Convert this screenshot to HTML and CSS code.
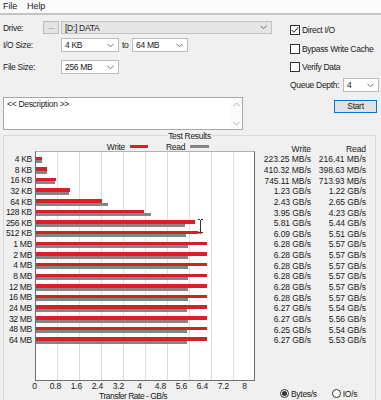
FILE: index.html
```html
<!DOCTYPE html>
<html>
<head>
<meta charset="utf-8">
<title>ATTO Disk Benchmark</title>
<link rel="stylesheet" href="styles.css">
</head>
<body>
<div class="app">
  <div class="menubar"><span class="menu">File</span><span class="menu">Help</span></div>
  <div class="top">
    <div class="left">
      <div class="row r-drive">
        <span class="lbl-drive">Drive:</span>
        <span class="btn-dots">...</span>
        <span class="combo combo-drive"><span>[D:] DATA</span><svg class="chev" width="7" height="5" viewBox="0 0 7 5"><polyline points="0.5,0.8 3.5,3.8 6.5,0.8" fill="none" stroke="#6a6a6a" stroke-width="1"/></svg></span>
      </div>
      <div class="row r-io">
        <span class="lbl">I/O Size:</span>
        <span class="combo combo-sm"><span>4 KB</span><svg class="chev" width="7" height="5" viewBox="0 0 7 5"><polyline points="0.5,0.8 3.5,3.8 6.5,0.8" fill="none" stroke="#6a6a6a" stroke-width="1"/></svg></span>
        <span class="to">to</span>
        <span class="combo combo-to"><span>64 MB</span><svg class="chev" width="7" height="5" viewBox="0 0 7 5"><polyline points="0.5,0.8 3.5,3.8 6.5,0.8" fill="none" stroke="#6a6a6a" stroke-width="1"/></svg></span>
      </div>
      <div class="row r-fs">
        <span class="lbl">File Size:</span>
        <span class="combo combo-sm"><span>256 MB</span><svg class="chev" width="7" height="5" viewBox="0 0 7 5"><polyline points="0.5,0.8 3.5,3.8 6.5,0.8" fill="none" stroke="#6a6a6a" stroke-width="1"/></svg></span>
      </div>
      <div class="desc">
        <div class="desc-text">&lt;&lt; Description &gt;&gt;</div>
        <div class="scroll">
          <svg width="7" height="5" viewBox="0 0 7 5"><polyline points="0.5,4 3.5,1 6.5,4" fill="none" stroke="#b0b0b0" stroke-width="1"/></svg>
          <svg width="7" height="5" viewBox="0 0 7 5"><polyline points="0.5,1 3.5,4 6.5,1" fill="none" stroke="#b0b0b0" stroke-width="1"/></svg>
        </div>
      </div>
    </div>
    <div class="right">
      <div class="check c1"><span class="box"><svg width="8" height="8" viewBox="0 0 8 8"><polyline points="0.8,4 3,6.3 7.2,1.2" fill="none" stroke="#222" stroke-width="1"/></svg></span><span>Direct I/O</span></div>
      <div class="check c2"><span class="box"></span><span>Bypass Write Cache</span></div>
      <div class="check c3"><span class="box"></span><span>Verify Data</span></div>
      <div class="queue">
        <span class="queue-lbl">Queue Depth:</span>
        <span class="combo combo-q"><span>4</span><svg class="chev" width="7" height="5" viewBox="0 0 7 5"><polyline points="0.5,0.8 3.5,3.8 6.5,0.8" fill="none" stroke="#6a6a6a" stroke-width="1"/></svg></span>
      </div>
      <div class="start">Start</div>
    </div>
  </div>

  <fieldset class="results">
    <legend>Test Results</legend>
    <div class="res-body">
      <div class="plot">
        <div class="legend">
          <span class="lg-write">Write</span><span class="sw sw-red"></span>
          <span class="lg-read">Read</span><span class="sw sw-gray"></span>
        </div>
        <div class="chart-row">
          <div class="ylabels">
            <div>4 KB</div><div>8 KB</div><div>16 KB</div><div>32 KB</div><div>64 KB</div><div>128 KB</div>
            <div>256 KB</div><div>512 KB</div><div>1 MB</div><div>2 MB</div><div>4 MB</div><div>8 MB</div>
            <div>12 MB</div><div>16 MB</div><div>24 MB</div><div>32 MB</div><div>48 MB</div><div>64 MB</div>
          </div>
          <div class="chart">
            <div class="bars"><div class="bw" style="width:5.95px"></div><div class="br" style="width:5.77px"></div></div>
            <div class="bars"><div class="bw" style="width:10.94px"></div><div class="br" style="width:10.63px"></div></div>
            <div class="bars"><div class="bw" style="width:19.86px"></div><div class="br" style="width:19.03px"></div></div>
            <div class="bars"><div class="bw" style="width:33.58px"></div><div class="br" style="width:33.31px"></div></div>
            <div class="bars"><div class="bw" style="width:66.34px"></div><div class="br" style="width:72.35px"></div></div>
            <div class="bars"><div class="bw" style="width:107.84px"></div><div class="br" style="width:115.48px"></div></div>
            <div class="bars"><div class="bw" style="width:158.61px"></div><div class="br" style="width:148.51px"></div></div>
            <div class="bars"><div class="bw" style="width:166.26px"></div><div class="br" style="width:150.42px"></div></div>
            <div class="bars"><div class="bw" style="width:171.44px"></div><div class="br" style="width:152.06px"></div></div>
            <div class="bars"><div class="bw" style="width:171.44px"></div><div class="br" style="width:152.06px"></div></div>
            <div class="bars"><div class="bw" style="width:171.44px"></div><div class="br" style="width:152.06px"></div></div>
            <div class="bars"><div class="bw" style="width:171.44px"></div><div class="br" style="width:152.06px"></div></div>
            <div class="bars"><div class="bw" style="width:171.44px"></div><div class="br" style="width:152.06px"></div></div>
            <div class="bars"><div class="bw" style="width:171.44px"></div><div class="br" style="width:152.06px"></div></div>
            <div class="bars"><div class="bw" style="width:171.17px"></div><div class="br" style="width:151.24px"></div></div>
            <div class="bars"><div class="bw" style="width:171.17px"></div><div class="br" style="width:151.79px"></div></div>
            <div class="bars"><div class="bw" style="width:170.63px"></div><div class="br" style="width:151.24px"></div></div>
            <div class="bars"><div class="bw" style="width:171.17px"></div><div class="br" style="width:150.97px"></div></div>
          </div>
        </div>
        <div class="xaxis">
          <span>0</span><span>0.8</span><span>1.6</span><span>2.4</span><span>3.2</span><span>4</span><span>4.8</span><span>5.6</span><span>6.4</span><span>7.2</span><span>8</span>
        </div>
        <div class="xtitle">Transfer Rate - GB/s</div>
      </div>
      <div class="values">
        <div class="vgrid">
          <div>Write</div><div>Read</div>
          <div>223.25 MB/s</div><div>216.41 MB/s</div>
          <div>410.32 MB/s</div><div>398.63 MB/s</div>
          <div>745.11 MB/s</div><div>713.93 MB/s</div>
          <div>1.23 GB/s</div><div>1.22 GB/s</div>
          <div>2.43 GB/s</div><div>2.65 GB/s</div>
          <div>3.95 GB/s</div><div>4.23 GB/s</div>
          <div>5.81 GB/s</div><div>5.44 GB/s</div>
          <div>6.09 GB/s</div><div>5.51 GB/s</div>
          <div>6.28 GB/s</div><div>5.57 GB/s</div>
          <div>6.28 GB/s</div><div>5.57 GB/s</div>
          <div>6.28 GB/s</div><div>5.57 GB/s</div>
          <div>6.28 GB/s</div><div>5.57 GB/s</div>
          <div>6.28 GB/s</div><div>5.57 GB/s</div>
          <div>6.28 GB/s</div><div>5.57 GB/s</div>
          <div>6.27 GB/s</div><div>5.54 GB/s</div>
          <div>6.27 GB/s</div><div>5.56 GB/s</div>
          <div>6.25 GB/s</div><div>5.54 GB/s</div>
          <div>6.27 GB/s</div><div>5.53 GB/s</div>
        </div>
        <div class="units">
          <span class="radio on"></span><span class="rl">Bytes/s</span>
          <span class="radio"></span><span class="rl">IO/s</span>
        </div>
      </div>
    </div>
  </fieldset>

  <svg class="ibeam" width="7" height="16" viewBox="0 0 7 16">
    <path d="M1 1.5h2M4 1.5h2M3.5 2v12M1 14.5h2M4 14.5h2" fill="none" stroke="#fff" stroke-width="2.2"/>
    <path d="M1 1.5h2M4 1.5h2M3.5 2v12M1 14.5h2M4 14.5h2" fill="none" stroke="#333" stroke-width="1"/>
  </svg>
</div>
</body>
</html>
```

FILE: styles.css
```css
* { box-sizing: border-box; }
html, body { margin: 0; padding: 0; }
body {
  width: 381px;
  height: 400px;
  overflow: hidden;
  background: #f0f0f0;
  font-family: "Liberation Sans", Arial, sans-serif;
  font-size: 8.5px;
  letter-spacing: -0.3px;
  color: #1a1a1a;
  white-space: nowrap;
}
.app { position: relative; width: 381px; height: 400px; overflow: hidden; }

.menubar {
  display: flex;
  height: 15px;
  line-height: 13px;
  background: #fbfbfb;
  border-bottom: 2px solid #c4c4c4;
}
.menu { margin-left: 3px; font-size: 9px; letter-spacing: -0.1px; }
.menu + .menu { margin-left: 10px; }

.top { display: flex; }
.left { width: 272px; padding-left: 3px; display: flex; flex-direction: column; }
.row { display: flex; align-items: center; }
.r-drive { margin-top: 6px; height: 13px; }
.r-io { margin-top: 4px; height: 14px; }
.r-fs { margin-top: 8px; height: 14px; }
.lbl-drive { width: 40px; }
.lbl { width: 58px; }
.btn-dots {
  width: 16px; height: 13px;
  background: #e3e3e3;
  border: 1px solid #bcbcbc;
  color: #8a8a8a;
  text-align: center;
  line-height: 8px;
}
.combo {
  display: flex;
  align-items: center;
  height: 100%;
  border: 1px solid #bdbdbd;
  background: #fff;
  padding-left: 3px;
}
.combo .chev { margin-left: auto; margin-right: 4px; }
.combo-drive { margin-left: 2px; width: 211px; background: #e5e5e5; border-color: #c2c2c2; }
.combo-sm { width: 58px; }
.to { width: 13px; padding-left: 3px; }
.combo-to { width: 56px; }

.desc {
  margin-top: 23px;
  height: 33px;
  width: 240px;
  background: #fff;
  border: 1px solid #a8a8a8;
  display: flex;
}
.desc-text { flex: 1; padding: 1px 0 0 3px; line-height: 10px; }
.scroll {
  width: 11px;
  display: flex;
  flex-direction: column;
  justify-content: space-between;
  align-items: center;
  padding: 4px 0 3px;
  background: #fbfbfb;
}

.right { margin-left: 18px; width: 89px; display: flex; flex-direction: column; }
.check { display: flex; align-items: center; height: 10px; }
.c1 { margin-top: 10px; }
.c2 { margin-top: 9px; }
.c3 { margin-top: 8px; }
.box {
  width: 10px; height: 10px;
  border: 1px solid #333;
  background: #fff;
  margin-right: 2px;
  display: flex;
  flex: none;
}
.queue { margin-top: 6px; height: 14px; display: flex; align-items: center; }
.queue-lbl { width: 53px; }
.combo-q { width: 36px; }
.start {
  margin-top: 8px;
  align-self: flex-end;
  margin-right: 2px;
  width: 43px; height: 13px;
  border: 1px solid #0078d7;
  background: #e1e1e1;
  text-align: center;
  line-height: 11px;
}

.results {
  margin: -2px 5px 0 3px;
  padding: 0;
  border: 1px solid #d8d8d8;
  min-inline-size: 0;
  height: 290px;
}
.results legend {
  margin-inline: auto;
  padding: 3px 1px 0;
  line-height: 11px;
}
.res-body { display: flex; }
.plot { width: 251px; flex: none; display: flex; flex-direction: column; }

.legend { display: flex; align-items: center; height: 9px; }
.lg-write { margin-left: 100px; width: 21px; text-align: right; }
.sw { height: 3px; }
.sw-red { margin-left: 5px; width: 18px; background: #d5202a; }
.lg-read { margin-left: 18px; width: 20px; }
.sw-gray { margin-left: 4px; width: 19px; background: #858585; }

.chart-row { display: flex; }
.ylabels {
  width: 29px;
  padding: 3px 1px 0 0;
  text-align: right;
}
.ylabels div { height: 10.65px; line-height: 10.65px; }
.chart {
  margin-left: 2px;
  width: 220px;
  height: 230px;
  border: 1px solid #6f6f6f;
  border-top-color: #b0b0b0;
  background-color: #fff;
  background-image: repeating-linear-gradient(to right, transparent 0 21px, #dedede 21px 22px);
  padding-top: 2px;
}
.bars { height: 10.65px; padding-top: 2.5px; }
.bw { height: 3.5px; background: #d5202a; }
.br { height: 3px; background: #858585; }

.xaxis { display: flex; margin-left: 20px; height: 10px; line-height: 10px; letter-spacing: -0.1px; }
.xaxis span { width: 22px; text-align: center; }
.xtitle { margin-left: 95px; line-height: 10px; letter-spacing: -0.5px; }

.values { display: flex; flex-direction: column; margin-left: 7px; }
.vgrid {
  display: grid;
  grid-template-columns: 49px 55px;
  grid-auto-rows: 10.65px;
  line-height: 10.65px;
  padding-top: 1.7px;
  text-align: right;
  letter-spacing: -0.05px;
}
.units { display: flex; align-items: center; margin-top: 43px; margin-left: 18px; height: 10px; }
.radio {
  width: 9px; height: 9px;
  border: 1px solid #333;
  border-radius: 50%;
  background: #fff;
  display: flex;
  align-items: center;
  justify-content: center;
  flex: none;
}
.radio.on::after {
  content: "";
  width: 5px; height: 5px;
  border-radius: 50%;
  background: #333;
}
.rl { margin-left: 2px; margin-right: 15px; }

.ibeam { position: absolute; left: 197px; top: 218px; }
```
